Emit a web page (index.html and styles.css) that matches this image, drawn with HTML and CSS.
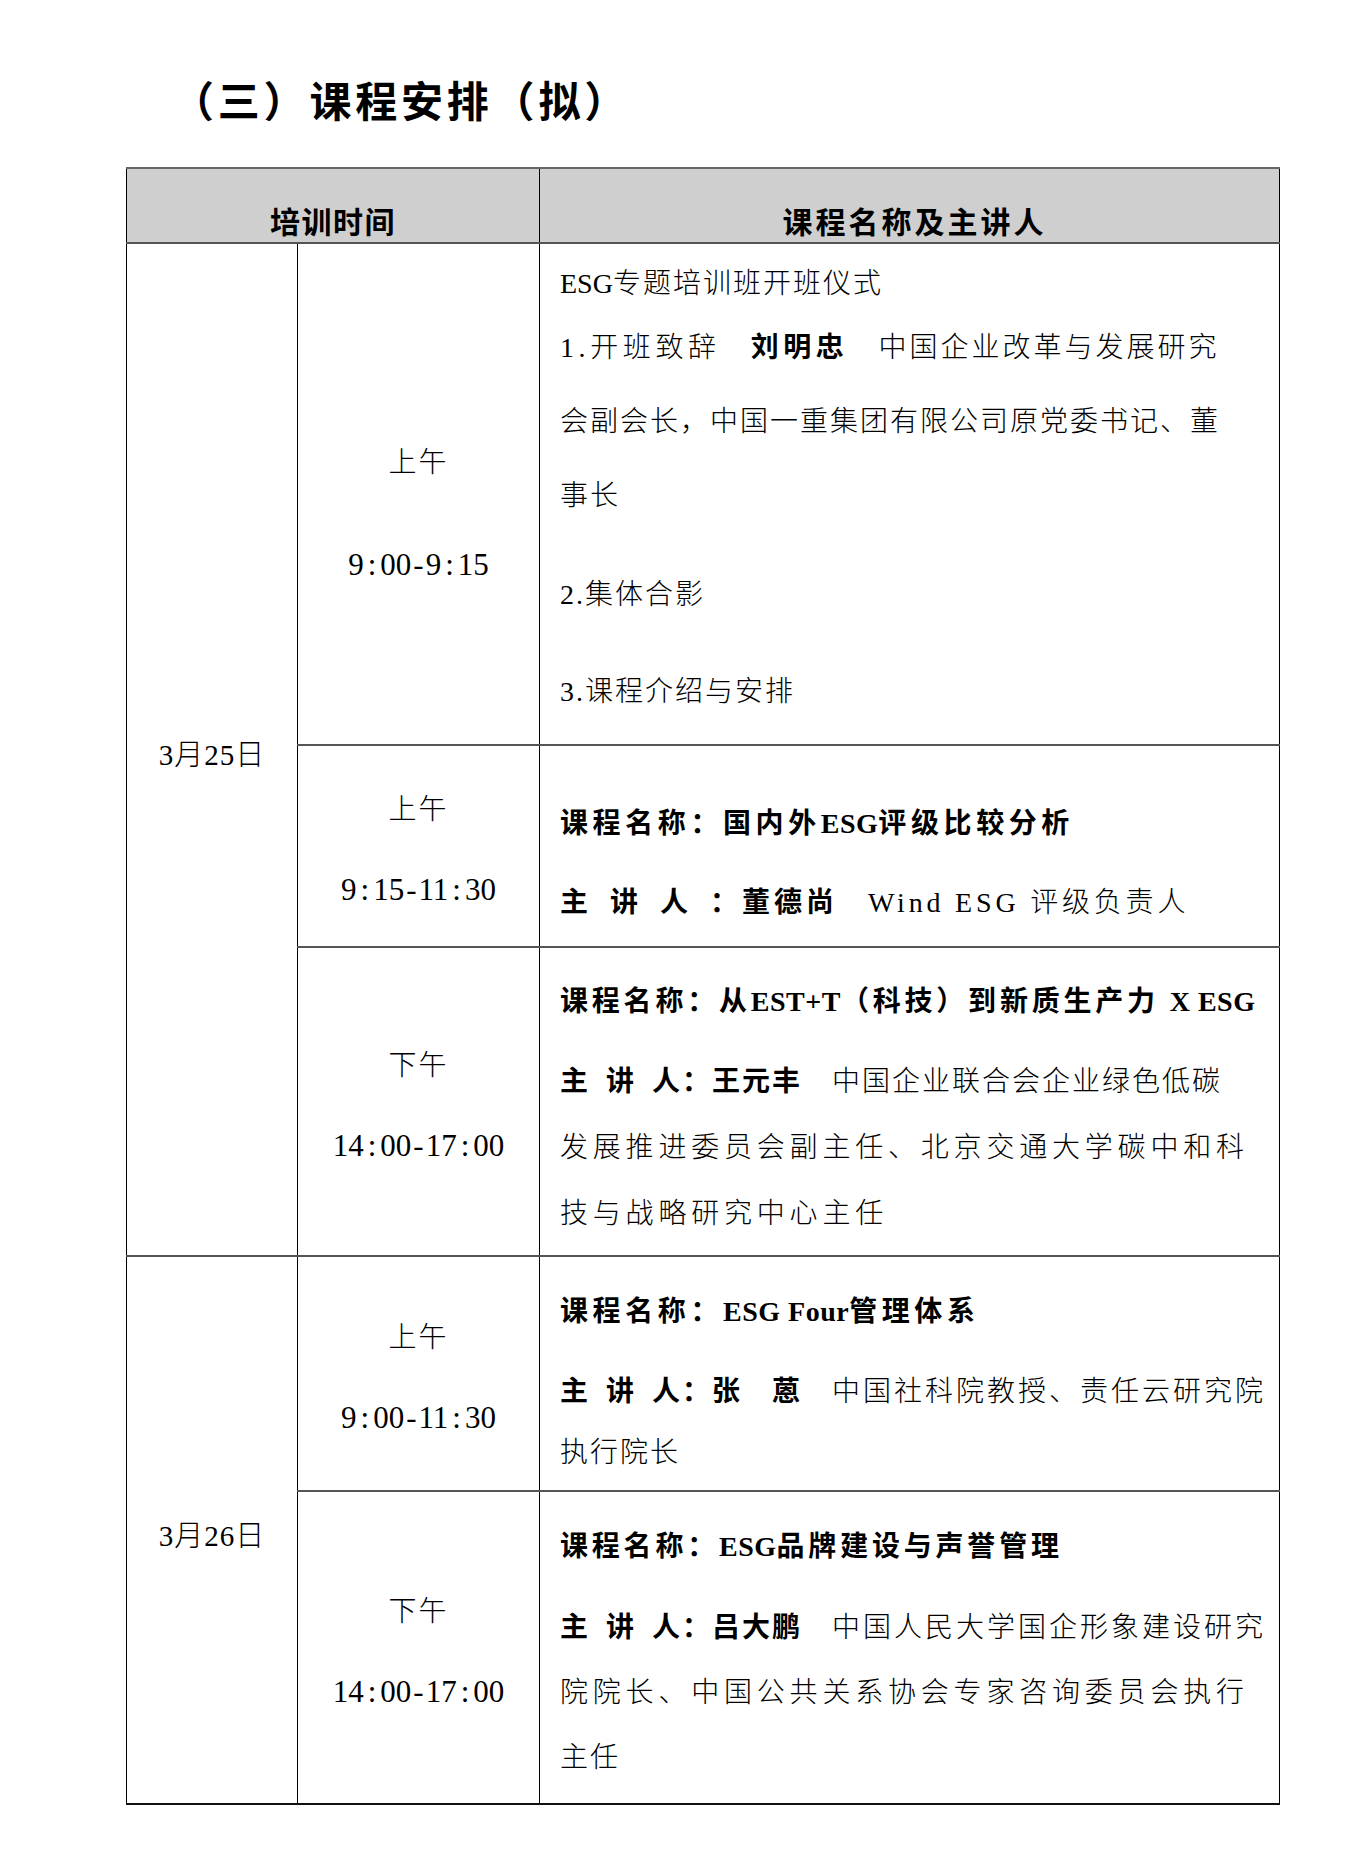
FILE: index.html
```html
<!DOCTYPE html>
<html lang="zh-CN">
<head>
<meta charset="utf-8">
<title>课程安排（拟）</title>
<link rel="stylesheet" href="styles.css">
</head>
<body>
<div class="page">
  <h1 class="title">（三）课程安排（拟）</h1>
  <table class="schedule">
    <colgroup><col class="c-date"><col class="c-time"><col class="c-course"></colgroup>
    <thead>
      <tr class="r-head"><th colspan="2">培训时间</th><th>课程名称及主讲人</th></tr>
    </thead>
    <tbody>
      <tr class="r1">
        <td class="date" rowspan="3">3月25日</td>
        <td class="time t1"><div class="ampm">上午</div><div class="clock">9<span class="colon">:</span>00<span class="dash">-</span>9<span class="colon">:</span>15</div></td>
        <td class="course c1">
          <div class="ln"><span class="lat">ESG</span>专题培训班开班仪式</div>
          <div class="ln"><span class="spread-x">1.开班致辞</span>　<b class="spread-x">刘明忠</b>　<span class="semi">中国企业改革与发展研究</span></div>
          <div class="ln">会副会长，中国一重集团有限公司原党委书记、董</div>
          <div class="ln">事长</div>
          <div class="ln p2">2.集体合影</div>
          <div class="ln p3">3.课程介绍与安排</div>
        </td>
      </tr>
      <tr class="r2">
        <td class="time"><div class="ampm">上午</div><div class="clock">9<span class="colon">:</span>15<span class="dash">-</span>11<span class="colon">:</span>30</div></td>
        <td class="course c2">
          <div class="ln"><b class="spread-x">课程名称：国内外<span class="lat">ESG</span>评级比较分析</b></div>
          <div class="ln"><b class="label">主&ensp;讲&ensp;人&ensp;：董德尚</b>&emsp;<span class="spread">Wind ESG 评级负责人</span></div>
        </td>
      </tr>
      <tr class="r3">
        <td class="time"><div class="ampm">下午</div><div class="clock">14<span class="colon">:</span>00<span class="dash">-</span>17<span class="colon">:</span>00</div></td>
        <td class="course c3">
          <div class="ln"><b class="spread">课程名称：从<span class="lat">EST+T</span>（科技）到新质生产力 <span class="lat">X ESG</span></b></div>
          <div class="ln sp"><b>主&ensp;讲&ensp;人：王元丰</b>　中国企业联合会企业绿色低碳</div>
          <div class="ln wide">发展推进委员会副主任、北京交通大学碳中和科</div>
          <div class="ln wide">技与战略研究中心主任</div>
        </td>
      </tr>
      <tr class="r4">
        <td class="date" rowspan="2">3月26日</td>
        <td class="time"><div class="ampm">上午</div><div class="clock">9<span class="colon">:</span>00<span class="dash">-</span>11<span class="colon">:</span>30</div></td>
        <td class="course c4">
          <div class="ln"><b class="spread-x">课程名称：<span class="lat">ESG Four</span>管理体系</b></div>
          <div class="ln sp"><b>主&ensp;讲&ensp;人：张　蒽</b>　<span class="semi">中国社科院教授、责任云研究院</span></div>
          <div class="ln">执行院长</div>
        </td>
      </tr>
      <tr class="r5">
        <td class="time"><div class="ampm">下午</div><div class="clock">14<span class="colon">:</span>00<span class="dash">-</span>17<span class="colon">:</span>00</div></td>
        <td class="course c5">
          <div class="ln"><b class="spread">课程名称：<span class="lat">ESG</span>品牌建设与声誉管理</b></div>
          <div class="ln sp"><b>主&ensp;讲&ensp;人：吕大鹏</b>　<span class="semi">中国人民大学国企形象建设研究</span></div>
          <div class="ln wide">院院长、中国公共关系协会专家咨询委员会执行</div>
          <div class="ln">主任</div>
        </td>
      </tr>
    </tbody>
  </table>
</div>
</body>
</html>
```

FILE: styles.css
```css
* { box-sizing: border-box; }
html, body { margin: 0; background: #fff; }
body {
  font-family: "Liberation Serif", "Noto Sans CJK SC", serif;
  color: #000;
}
.page {
  width: 1367px;
  padding: 73px 0 60px 126px;
}
.title {
  margin: 0 0 43px 46px;
  font-family: "Noto Sans CJK SC", sans-serif;
  font-weight: 700;
  font-size: 42px;
  line-height: 51px;
  letter-spacing: 3.8px;
}
.schedule {
  border-collapse: collapse;
  table-layout: fixed;
  width: 1153px;
}
.c-date { width: 171px; }
.c-time { width: 242px; }
.c-course { width: 740px; }
.schedule th,
.schedule td {
  border-left: 1px solid #000;
  border-right: 1px solid #000;
  border-top: 2px solid #555;
  border-bottom: 2px solid #555;
  padding: 0;
}
.r-head { height: 75px; }
.r-head th {
  background: #cfcfcf;
  border-top-color: #666;
  font-family: "Noto Sans CJK SC", sans-serif;
  font-weight: 700;
  font-size: 30px;
  line-height: 36px;
  letter-spacing: 1.5px;
  vertical-align: bottom;
  text-align: center;
  padding-bottom: 4px;
}
.r-head th + th { letter-spacing: 3px; padding-left: 10px; }
.r1 { height: 502px; }
.r2 { height: 202px; }
.r3 { height: 309px; }
.r4 { height: 235px; }
.r5 { height: 313px; }
.r5 td, .r4 .date { border-bottom: 2px solid #111; }

.date {
  text-align: center;
  vertical-align: middle;
  font-size: 29px;
  font-weight: 300;
  letter-spacing: 1px;
  padding-top: 5px !important;
}

.time {
  text-align: center;
  vertical-align: middle;
  font-size: 28px;
  font-weight: 300;
  letter-spacing: 2px;
  padding-top: 8px !important;
}
.time .ampm, .time .clock { line-height: 80px; }
.time .clock { font-size: 31px; letter-spacing: 0; }
.time .colon { margin: 0 4px; }
.time .dash { margin: 0 2px; }
.t1 { padding-top: 40px !important; }
.t1 .ampm, .t1 .clock { line-height: 102px; }

.course {
  vertical-align: top;
  padding-left: 20px !important;
  font-size: 28px;
  font-weight: 300;
  letter-spacing: 2px;
  white-space: nowrap;
}
.course b { font-weight: 700; }
.course .lat { letter-spacing: 0; }
.course .spread { letter-spacing: 3.8px; }
.course .spread-x { letter-spacing: 4.6px; }
.course .spread .lat,
.course .spread-x .lat { letter-spacing: 0.5px; }
.course .semi { letter-spacing: 3px; }
.course .label { letter-spacing: 4px; }

.c1 { padding-top: 13px !important; }
.c1 .ln { line-height: 74px; }
.c1 .ln:first-child { line-height: 54px; }
.c1 .p2 { margin-top: 25px; }
.c1 .p3 { margin-top: 23px; }

.c2 { padding-top: 38px !important; }
.c2 .ln { line-height: 79px; }

.c3 { padding-top: 21px !important; }
.c3 .ln { line-height: 66px; }
.c3 .sp { margin-top: 14px; }

.c4 { padding-top: 24px !important; }
.c4 .ln { line-height: 61px; }
.c4 .sp { margin-top: 19px; }

.c5 { padding-top: 22px !important; }
.c5 .ln { line-height: 65px; }
.c5 .sp { margin-top: 16px; }

.wide { letter-spacing: 4.8px; }
```
